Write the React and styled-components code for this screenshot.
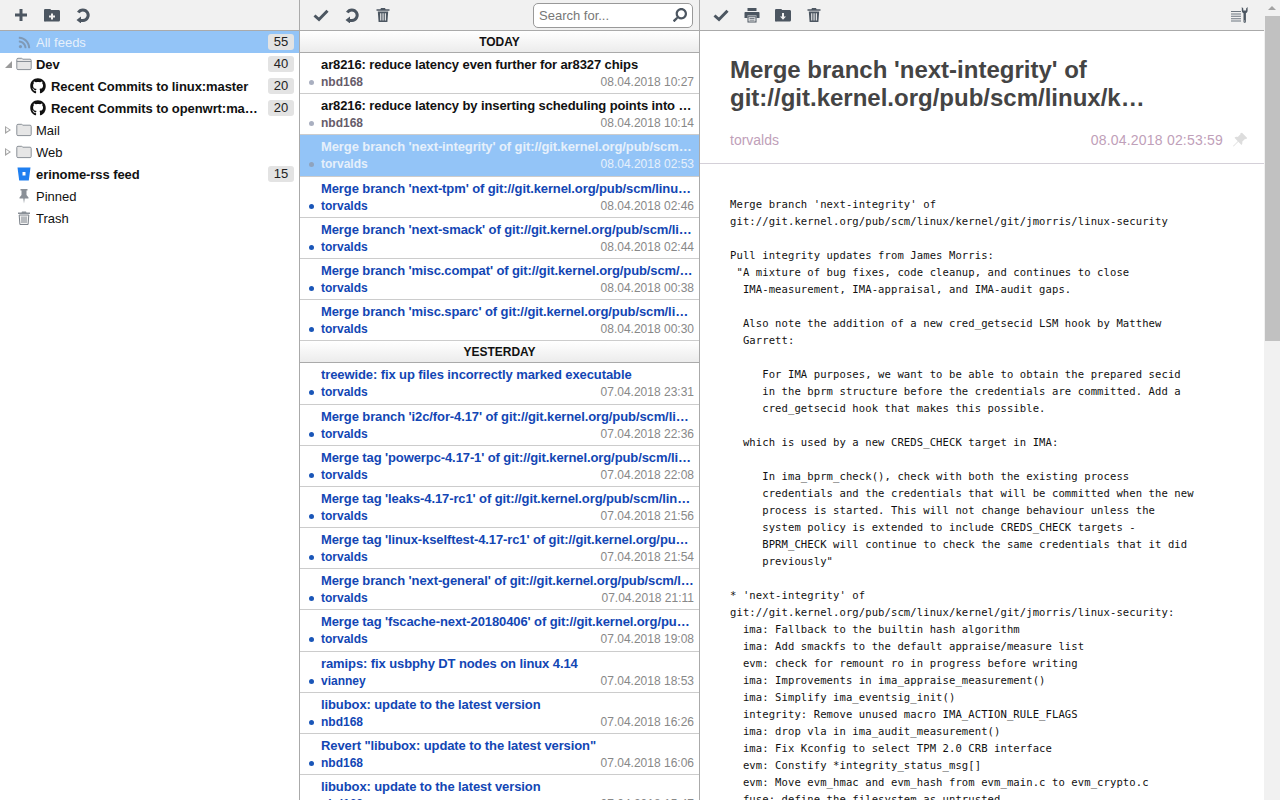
import React from "react"
import styled, { createGlobalStyle } from "styled-components"
import { FaGithub, FaRss, FaSearch } from "react-icons/fa"

const GlobalStyle = createGlobalStyle`
    html, body {
        margin: 0;
        height: 100%;
        overflow: hidden;
    }
    body {
        font-family: "Liberation Sans", Arial, sans-serif;
        font-size: 13px;
        background: #fff;
    }
`

const Shell = styled.div`
    display: flex;
    height: 100vh;
    overflow: hidden;
`
const Pane = styled.div`
    display: flex;
    flex-direction: column;
    flex: ${props => props.$width ? `0 0 ${props.$width}px` : "1 1 0"};
    min-width: 0;
    box-sizing: border-box;
    border-right: ${props => props.$width ? "1px solid #aaa" : "none"};
`
const Toolbar = styled.div`
    flex: none;
    display: flex;
    align-items: center;
    box-sizing: border-box;
    height: 31px;
    padding-left: 5px;
    padding-right: ${props => props.$end || 0}px;
    background: #f1f1f1;
    border-bottom: 1px solid #aaa;
`
const ToolButton = styled.div`
    flex: none;
    width: 31px;
    height: 30px;
    display: flex;
    align-items: center;
    justify-content: center;
    color: #4c5661;
`
const Spacer = styled.div`
    flex: 1;
`
const SearchBox = styled.div`
    flex: none;
    display: flex;
    align-items: center;
    box-sizing: border-box;
    width: 160px;
    height: 25px;
    margin-right: 6px;
    padding: 0 5px;
    background: #fff;
    border: 1px solid #999;
    border-radius: 5px;
    color: #4c5661;
`
const SearchInput = styled.input`
    flex: 1;
    min-width: 0;
    padding: 0;
    border: 0;
    outline: 0;
    background: transparent;
    font: 13px "Liberation Sans", Arial, sans-serif;
    &::placeholder {
        color: #777;
        opacity: 1;
    }
`
const SearchGlyph = styled(FaSearch)`
    flex: none;
    font-size: 14px;
    transform: scaleX(-1);
`
const Svg = styled.svg`
    display: block;
    width: ${props => props.$size || 16}px;
    height: ${props => props.$size || 16}px;
    fill: currentColor;
`
const PinSvg = styled(Svg)`
    color: #ddd;
`

const PlusIcon = () => (
    <Svg viewBox="0 0 16 16"><path d="M6.500 2h3v4.500H14v3H9.500V14h-3V9.500H2v-3h4.500z" /></Svg>
)
const FolderPlusIcon = () => (
    <Svg viewBox="0 0 16 16"><path fillRule="evenodd" d="M0 3.500C0 2.400.6 2 1.500 2h4.200c.8 0 1.100.5 1.500 1h7.300c1 0 1.500.6 1.500 1.500v8.500c0 .9-.5 1.500-1.500 1.500h-13C.5 15 0 14.400 0 13.500zM7 6.500v2H5v2h2v2h2v-2h2v-2H9v-2z" /></Svg>
)
const FolderDownIcon = () => (
    <Svg viewBox="0 0 16 16"><path fillRule="evenodd" d="M0 3.500C0 2.400.6 2 1.500 2h4.200c.8 0 1.100.5 1.500 1h7.300c1 0 1.500.6 1.500 1.500v8.500c0 .9-.5 1.500-1.500 1.500h-13C.5 15 0 14.400 0 13.500zM7 6v3.500H5l3 3.200 3-3.200H9V6z" /></Svg>
)
const RefreshIcon = () => (
    <Svg viewBox="0 0 16 16">
        <path d="M3.300 5.500A5.300 5.300 0 1 1 8 13.500H5" fill="none" stroke="currentColor" strokeWidth="3" />
        <path d="M1.500 13L6 9.500v7z" />
    </Svg>
)
const CheckIcon = () => (
    <Svg viewBox="0 0 16 16">
        <path d="M1.500 8.500L6 12.500 14.500 3.800" fill="none" stroke="currentColor" strokeWidth="3" />
    </Svg>
)
const TrashIcon = () => (
    <Svg viewBox="0 0 16 16">
        <path fillRule="evenodd" d="M6 1h4l.6 1.200H14.500v1.500h-13V2.200H5.400zM2.800 4.600h10.400L12.400 15H3.600zM5.200 6.200v7.200h1.100V6.200zM7.500 6.200v7.200h1.100V6.200zM9.800 6.200v7.200h1.100V6.200z" />
    </Svg>
)
const PrintIcon = () => (
    <Svg viewBox="0 0 16 16">
        <path d="M3.500 1h9v3h-9z" />
        <path fillRule="evenodd" d="M1.500 5h13c.6 0 1 .4 1 1v5h-3V8.500h-9V11h-3V6c0-.6.4-1 1-1z" />
        <path fillRule="evenodd" d="M3.500 9.200h9V15.500h-9zM4.500 10.200V14.500h7V10.200zM5.500 11h5v.8h-5zM5.500 12.800h5v.8h-5z" />
    </Svg>
)
const SettingsIcon = () => (
    <Svg viewBox="0 0 18 16" $size={18}>
        <path d="M0 4h10v1H0zM0 6.400h10v1H0zM0 8.800h10v1H0zM0 11.200h10v1H0zM0 13.600h10v1H0z" fill="#6d7680" />
        <path fillRule="evenodd" d="M10.800 0v3.500c0 1.300.8 2.200 1.700 2.700V14.500c0 .8.500 1.300 1.200 1.300s1.200-.5 1.200-1.300V6.200c.9-.5 1.700-1.400 1.700-2.700V0l-1.500 1.500v2h-2.800v-2zM13.300 13.500h.8v1h-.8z" />
    </Svg>
)
const FolderIcon = ({ open }) => (
    <Svg viewBox="0 0 16 16">
        <path d="M.8 3.500c0-.8.4-1.200 1.200-1.200h3.500c.6 0 .9.300 1.200.9h7.300c.8 0 1.200.4 1.200 1.200v8c0 .8-.4 1.200-1.200 1.200H2c-.8 0-1.200-.4-1.200-1.200z" fill="#e6e6e6" stroke="#8a9097" />
        {open && <path d="M.8 5.500h14.400" fill="none" stroke="#8a9097" />}
    </Svg>
)
const BucketIcon = () => (
    <Svg viewBox="0 0 16 16">
        <path fillRule="evenodd" d="M1.500 1.500h13l-1.700 13H3.200zM6.500 6v3.500h3V6z" fill="#1f7ff0" />
    </Svg>
)
const PinnedIcon = () => (
    <Svg viewBox="0 0 16 16">
        <path fillRule="evenodd" d="M4.500 1h7v1.500H10.500V7l2 2.500v1H8.700L8 15.500l-.7-5H3.500v-1L5.500 7V2.500H4.500z" fill="#8a9097" />
    </Svg>
)
const TrashFeedIcon = () => (
    <Svg viewBox="0 0 16 16">
        <path d="M6 1.500h4l.5 1h3.500v1.500H2V2.500h3.500z" fill="#8a9097" />
        <path d="M3.200 5h9.600l-.7 9.500H3.900z" fill="#f2f2f2" stroke="#7c828a" />
        <path d="M6 6.500v6.500M8 6.500v6.500M10 6.500v6.500" stroke="#7c828a" fill="none" />
    </Svg>
)
const PinTiltIcon = () => (
    <PinSvg viewBox="0 0 16 16">
        <path d="M10 .8l5.200 5.200-1.200 1.200-.8-.5-3 3c.4 1.200.2 2.300-.7 3.200L6.300 9.700 1.500 14.500 1 14l4.800-4.800L2.500 5.700c.9-.9 2-1.100 3.200-.7l3-3-.5-.8z" />
    </PinSvg>
)

const FeedList = styled.div`
    flex: 1;
    overflow: hidden;
`
const FeedRow = styled.div`
    display: flex;
    align-items: center;
    height: 22px;
    padding-left: ${props => props.$indent || 0}px;
    padding-right: 5px;
    font-weight: ${props => props.$bold ? "bold" : "normal"};
    letter-spacing: ${props => props.$bold ? "-0.07px" : "0"};
    color: ${props => props.$selected ? "#e6f0fb" : "#111"};
    background: ${props => props.$selected ? "#93c4f7" : "transparent"};
`
const Arrow = styled.span`
    flex: none;
    width: 16px;
    display: flex;
    justify-content: flex-start;
    padding-left: 5px;
    box-sizing: border-box;
`
const ArrowOpen = styled.i`
    width: 0;
    height: 0;
    border-style: solid;
    border-width: 0 0 7px 7px;
    border-color: transparent transparent #9a9a9a transparent;
`
const ArrowClosed = styled.i`
    box-sizing: border-box;
    width: 6px;
    height: 8px;
    background: #a4a4a4;
    clip-path: polygon(0 0, 100% 50%, 0 100%, 0 80%, 70% 50%, 20% 20%, 20% 80%, 0 80%);
`
const FeedIcon = styled.span`
    flex: none;
    width: 16px;
    height: 16px;
    margin-right: ${props => props.$gap || 4}px;
    display: flex;
    align-items: center;
    justify-content: center;
    color: ${props => props.$color || "#111"};
`
const FeedName = styled.span`
    flex: 1;
    min-width: 0;
    white-space: nowrap;
    overflow: hidden;
    text-overflow: ellipsis;
`
const Count = styled.span`
    flex: none;
    width: 26px;
    height: 16px;
    margin-left: 10px;
    line-height: 16px;
    text-align: center;
    font-weight: normal;
    font-size: 13px;
    letter-spacing: 0;
    color: #222;
    background: #e3e3e3;
    border-radius: 3px;
`

const Articles = styled.div`
    flex: 1;
    overflow: hidden;
`
const DayHeader = styled.div`
    box-sizing: border-box;
    height: 22px;
    line-height: 23px;
    text-align: center;
    font-size: 12px;
    font-weight: bold;
    color: #111;
    background: linear-gradient(#fff, #ececec);
    border-bottom: 1px solid #aaa;
`
const Article = styled.div`
    box-sizing: border-box;
    height: 41.2px;
    padding: 1px 5px 0 21px;
    background: ${props => props.$selected ? "#93c4f7" : "transparent"};
    border-bottom: 1px solid #ccc;
`
const ArticleTitle = styled.div`
    height: 21px;
    line-height: 22px;
    font-weight: bold;
    letter-spacing: -0.1px;
    white-space: nowrap;
    overflow: hidden;
    text-overflow: ellipsis;
    color: ${props => props.$selected ? "#e6f0fb" : props.$unread ? "#1246b4" : "#111"};
`
const ArticleMeta = styled.div`
    position: relative;
    display: flex;
    justify-content: space-between;
    height: 14px;
    line-height: 14px;
    font-size: 12px;
`
const Dot = styled.i`
    position: absolute;
    left: -12px;
    top: 5px;
    width: 5px;
    height: 5px;
    border-radius: 50%;
    background: ${props => props.$selected ? "#8fa3bd" : props.$unread ? "#1a56b8" : "#a9afc0"};
`
const Author = styled.span`
    font-weight: bold;
    color: ${props => props.$selected ? "#e6f0fb" : props.$unread ? "#1246b4" : "#665c6a"};
`
const Stamp = styled.span`
    color: ${props => props.$selected ? "#e6f0fb" : "#888"};
`

const Reader = styled.div`
    flex: 1;
    overflow: hidden;
`
const ReaderHead = styled.div`
    box-sizing: border-box;
    height: 133px;
    padding: 25px 16px 0 30px;
    border-bottom: 1px solid #d4d0d8;
`
const ReaderTitle = styled.div`
    max-height: 56px;
    width: 420px;
    line-height: 28px;
    font-size: 24px;
    font-weight: bold;
    color: #444;
    overflow-wrap: anywhere;
    display: -webkit-box;
    -webkit-box-orient: vertical;
    -webkit-line-clamp: 2;
    overflow: hidden;
`
const ReaderMeta = styled.div`
    display: flex;
    align-items: center;
    margin-top: 19px;
    font-size: 14px;
    line-height: 18px;
    color: #bfa0b9;
`
const ReaderDate = styled.span`
    margin-left: auto;
    margin-right: 9px;
    letter-spacing: 0.2px;
`
const ReaderBody = styled.pre`
    margin: 0;
    padding: 32px 30px 0;
    font-family: "DejaVu Sans Mono", "Liberation Mono", monospace;
    font-size: 10.55px;
    letter-spacing: 0.09px;
    line-height: 17px;
    color: #111;
`

const ScrollTrack = styled.div`
    flex: 0 0 16px;
    display: flex;
    flex-direction: column;
    align-items: center;
    background: #f1f1f1;
`
const ScrollUp = styled.div`
    flex: none;
    height: 16px;
    width: 16px;
    display: flex;
    align-items: center;
    justify-content: center;
    &::before {
        content: "";
        border-style: solid;
        border-width: 0 4px 4px;
        border-color: transparent transparent #a3a3a3;
    }
`
const ScrollThumb = styled.div`
    flex: none;
    width: 15px;
    height: 325px;
    background: #c1c1c1;
`

const today = [
    { title: "ar8216: reduce latency even further for ar8327 chips", author: "nbd168", date: "08.04.2018 10:27" },
    { title: "ar8216: reduce latency by inserting scheduling points into the switch code", author: "nbd168", date: "08.04.2018 10:14" },
    { title: "Merge branch 'next-integrity' of git://git.kernel.org/pub/scm/linux/kernel/git/jmorris", author: "torvalds", date: "08.04.2018 02:53", selected: true },
    { title: "Merge branch 'next-tpm' of git://git.kernel.org/pub/scm/linux/kernel/git/jmorris", author: "torvalds", date: "08.04.2018 02:46", unread: true },
    { title: "Merge branch 'next-smack' of git://git.kernel.org/pub/scm/linux/kernel/git/jmorris", author: "torvalds", date: "08.04.2018 02:44", unread: true },
    { title: "Merge branch 'misc.compat' of git://git.kernel.org/pub/scm/linux/kernel/git/viro", author: "torvalds", date: "08.04.2018 00:38", unread: true },
    { title: "Merge branch 'misc.sparc' of git://git.kernel.org/pub/scm/linux/kernel/git/viro", author: "torvalds", date: "08.04.2018 00:30", unread: true },
]

const yesterday = [
    { title: "treewide: fix up files incorrectly marked executable", author: "torvalds", date: "07.04.2018 23:31" },
    { title: "Merge branch 'i2c/for-4.17' of git://git.kernel.org/pub/scm/linux/kernel/git/wsa", author: "torvalds", date: "07.04.2018 22:36" },
    { title: "Merge tag 'powerpc-4.17-1' of git://git.kernel.org/pub/scm/linux/kernel/git/powerpc", author: "torvalds", date: "07.04.2018 22:08" },
    { title: "Merge tag 'leaks-4.17-rc1' of git://git.kernel.org/pub/scm/linux/kernel/git/tobin", author: "torvalds", date: "07.04.2018 21:56" },
    { title: "Merge tag 'linux-kselftest-4.17-rc1' of git://git.kernel.org/pub/scm/linux/kernel", author: "torvalds", date: "07.04.2018 21:54" },
    { title: "Merge branch 'next-general' of git://git.kernel.org/pub/scm/linux/kernel/git/jmorris", author: "torvalds", date: "07.04.2018 21:11" },
    { title: "Merge tag 'fscache-next-20180406' of git://git.kernel.org/pub/scm/linux/kernel", author: "torvalds", date: "07.04.2018 19:08" },
    { title: "ramips: fix usbphy DT nodes on linux 4.14", author: "vianney", date: "07.04.2018 18:53" },
    { title: "libubox: update to the latest version", author: "nbd168", date: "07.04.2018 16:26" },
    { title: "Revert \"libubox: update to the latest version\"", author: "nbd168", date: "07.04.2018 16:06" },
    { title: "libubox: update to the latest version", author: "nbd168", date: "07.04.2018 15:47" },
].map(item => ({ ...item, unread: true }))

const bodyText = `Merge branch 'next-integrity' of
git://git.kernel.org/pub/scm/linux/kernel/git/jmorris/linux-security

Pull integrity updates from James Morris:
 "A mixture of bug fixes, code cleanup, and continues to close
  IMA-measurement, IMA-appraisal, and IMA-audit gaps.

  Also note the addition of a new cred_getsecid LSM hook by Matthew
  Garrett:

     For IMA purposes, we want to be able to obtain the prepared secid
     in the bprm structure before the credentials are committed. Add a
     cred_getsecid hook that makes this possible.

  which is used by a new CREDS_CHECK target in IMA:

     In ima_bprm_check(), check with both the existing process
     credentials and the credentials that will be committed when the new
     process is started. This will not change behaviour unless the
     system policy is extended to include CREDS_CHECK targets -
     BPRM_CHECK will continue to check the same credentials that it did
     previously"

* 'next-integrity' of
git://git.kernel.org/pub/scm/linux/kernel/git/jmorris/linux-security:
  ima: Fallback to the builtin hash algorithm
  ima: Add smackfs to the default appraise/measure list
  evm: check for remount ro in progress before writing
  ima: Improvements in ima_appraise_measurement()
  ima: Simplify ima_eventsig_init()
  integrity: Remove unused macro IMA_ACTION_RULE_FLAGS
  ima: drop vla in ima_audit_measurement()
  ima: Fix Kconfig to select TPM 2.0 CRB interface
  evm: Constify *integrity_status_msg[]
  evm: Move evm_hmac and evm_hash from evm_main.c to evm_crypto.c
  fuse: define the filesystem as untrusted`

const ArticleRow = ({ item }) => (
    <Article $selected={item.selected}>
        <ArticleTitle $selected={item.selected} $unread={item.unread}>{item.title}</ArticleTitle>
        <ArticleMeta>
            <Dot $selected={item.selected} $unread={item.unread} />
            <Author $selected={item.selected} $unread={item.unread}>{item.author}</Author>
            <Stamp $selected={item.selected}>{item.date}</Stamp>
        </ArticleMeta>
    </Article>
)

const App = () => (
    <Shell>
        <GlobalStyle />
        <Pane $width={300}>
            <Toolbar>
                <ToolButton><PlusIcon /></ToolButton>
                <ToolButton><FolderPlusIcon /></ToolButton>
                <ToolButton><RefreshIcon /></ToolButton>
            </Toolbar>
            <FeedList>
                <FeedRow $selected>
                    <Arrow />
                    <FeedIcon $color="#7f99b6"><FaRss size={13} /></FeedIcon>
                    <FeedName>All feeds</FeedName>
                    <Count>55</Count>
                </FeedRow>
                <FeedRow $bold>
                    <Arrow><ArrowOpen /></Arrow>
                    <FeedIcon><FolderIcon open /></FeedIcon>
                    <FeedName>Dev</FeedName>
                    <Count>40</Count>
                </FeedRow>
                <FeedRow $bold $indent={30}>
                    <FeedIcon $gap={5}><FaGithub size={16} /></FeedIcon>
                    <FeedName>Recent Commits to linux:master</FeedName>
                    <Count>20</Count>
                </FeedRow>
                <FeedRow $bold $indent={30}>
                    <FeedIcon $gap={5}><FaGithub size={16} /></FeedIcon>
                    <FeedName>Recent Commits to openwrt:master</FeedName>
                    <Count>20</Count>
                </FeedRow>
                <FeedRow>
                    <Arrow><ArrowClosed /></Arrow>
                    <FeedIcon><FolderIcon /></FeedIcon>
                    <FeedName>Mail</FeedName>
                </FeedRow>
                <FeedRow>
                    <Arrow><ArrowClosed /></Arrow>
                    <FeedIcon><FolderIcon /></FeedIcon>
                    <FeedName>Web</FeedName>
                </FeedRow>
                <FeedRow $bold>
                    <Arrow />
                    <FeedIcon><BucketIcon /></FeedIcon>
                    <FeedName>erinome-rss feed</FeedName>
                    <Count>15</Count>
                </FeedRow>
                <FeedRow>
                    <Arrow />
                    <FeedIcon><PinnedIcon /></FeedIcon>
                    <FeedName>Pinned</FeedName>
                </FeedRow>
                <FeedRow>
                    <Arrow />
                    <FeedIcon><TrashFeedIcon /></FeedIcon>
                    <FeedName>Trash</FeedName>
                </FeedRow>
            </FeedList>
        </Pane>
        <Pane $width={400}>
            <Toolbar>
                <ToolButton><CheckIcon /></ToolButton>
                <ToolButton><RefreshIcon /></ToolButton>
                <ToolButton><TrashIcon /></ToolButton>
                <Spacer />
                <SearchBox>
                    <SearchInput placeholder="Search for..." />
                    <SearchGlyph />
                </SearchBox>
            </Toolbar>
            <Articles>
                <DayHeader>TODAY</DayHeader>
                {today.map((item, i) => <ArticleRow key={i} item={item} />)}
                <DayHeader>YESTERDAY</DayHeader>
                {yesterday.map((item, i) => <ArticleRow key={i} item={item} />)}
            </Articles>
        </Pane>
        <Pane>
            <Toolbar $end={9}>
                <ToolButton><CheckIcon /></ToolButton>
                <ToolButton><PrintIcon /></ToolButton>
                <ToolButton><FolderDownIcon /></ToolButton>
                <ToolButton><TrashIcon /></ToolButton>
                <Spacer />
                <ToolButton><SettingsIcon /></ToolButton>
            </Toolbar>
            <Reader>
                <ReaderHead>
                    <ReaderTitle>Merge branch 'next-integrity' of git://git.kernel.org/pub/scm/linux/kernel/git/jmorris/linux-security</ReaderTitle>
                    <ReaderMeta>
                        <span>torvalds</span>
                        <ReaderDate>08.04.2018 02:53:59</ReaderDate>
                        <PinTiltIcon />
                    </ReaderMeta>
                </ReaderHead>
                <ReaderBody>{bodyText}</ReaderBody>
            </Reader>
        </Pane>
        <ScrollTrack>
            <ScrollUp />
            <ScrollThumb />
        </ScrollTrack>
    </Shell>
)

export default App
